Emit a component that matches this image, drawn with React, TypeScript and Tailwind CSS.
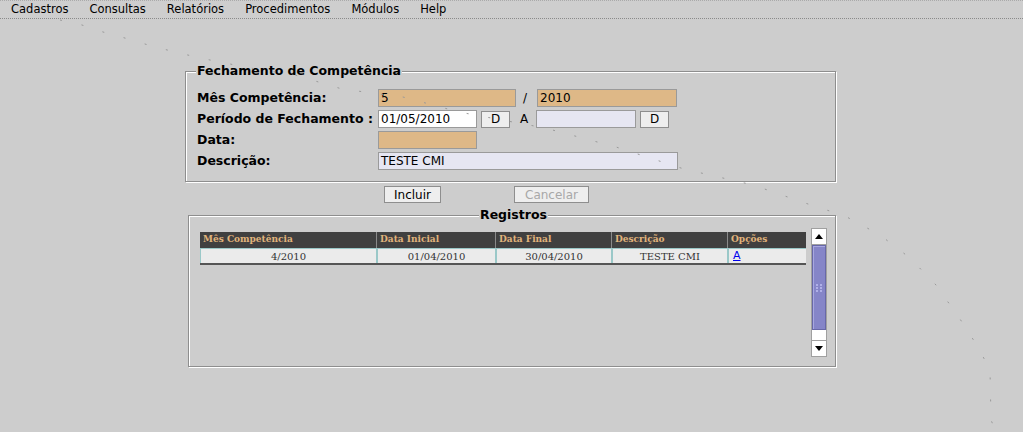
import React from 'react';

const sans = { fontFamily: '"DejaVu Sans", Verdana, sans-serif' };
const serif = { fontFamily: '"DejaVu Serif", Georgia, serif' };

const menu = ['Cadastros', 'Consultas', 'Relatórios', 'Procedimentos', 'Módulos', 'Help'];

const arc: [number, number][] = [
  [60, 20], [82, 25], [103, 32], [118, 36], [155, 47], [200, 58], [250, 68], [295, 75], [342, 89],
  [403, 97], [459, 112], [545, 128], [616, 147], [684, 169], [753, 185], [805, 203], [845, 216],
  [880, 235], [910, 258], [936, 285], [960, 319], [978, 347], [990, 370], [991, 420], [996, 432],
];

function Input({ w, bg, value }: { w: string; bg: string; value?: string }) {
  return (
    <div className={`${w} ${bg} h-[18px] border border-[#9a9a9a] flex items-center pl-[2px] text-[12px] font-normal text-black leading-none`}>
      {value}
    </div>
  );
}

function Btn({ label, w, disabled }: { label: string; w: string; disabled?: boolean }) {
  return (
    <button
      className={`${w} h-[17px] border border-[#8e8e8e] bg-[#eeeeee] text-[12px] font-normal leading-none flex items-center justify-center ${disabled ? 'text-[#a8a8a8]' : 'text-black'}`}
    >
      {label}
    </button>
  );
}

export default function App() {
  const cols = [
    { title: 'Mês Competência', w: 'w-[177px]', v: '4/2010' },
    { title: 'Data Inicial', w: 'w-[119px]', v: '01/04/2010' },
    { title: 'Data Final', w: 'w-[116px]', v: '30/04/2010' },
    { title: 'Descrição', w: 'w-[116px]', v: 'TESTE CMI' },
  ];

  return (
    <div className="relative w-[1023px] h-[432px] overflow-hidden bg-[#cdcdcd] text-black" style={sans}>
      <div className="h-[19px] border-b border-[#8a8a8a] border-t border-t-[#aaaaaa] border-dotted flex items-center pl-[11px] gap-[21px] text-[11.5px] bg-[#cecece]">
        {menu.map((m) => (
          <span key={m}>{m}</span>
        ))}
      </div>

      <fieldset className="ml-[185px] mt-[44px] w-[651px] border border-[#8e8e8e] shadow-[inset_1px_1px_0_#ffffff,1px_1px_0_#ffffff] pl-[11px] pr-[10px] pb-[11px] pt-[10px]">
        <legend className="bg-[#cdcdcd] px-[1px] -ml-[1px] text-[12.5px] font-bold leading-[16px]">Fechamento de Competência</legend>
        <div className="flex flex-col gap-[3px] text-[12.5px] font-bold">
          <div className="flex items-center h-[18px]">
            <span className="w-[181px]">Mês Competência:</span>
            <Input w="w-[138px]" bg="bg-[#deb887]" value="5" />
            <span className="w-[21px] pl-[7px] font-normal text-[12px]">/</span>
            <Input w="w-[140px]" bg="bg-[#deb887]" value="2010" />
          </div>
          <div className="flex items-center h-[18px]">
            <span className="w-[181px]">Período de Fechamento :</span>
            <Input w="w-[99px]" bg="bg-white" value="01/05/2010" />
            <span className="ml-[4px]">
              <Btn label="D" w="w-[29px]" />
            </span>
            <span className="w-[26px] pl-[2px] text-center font-normal text-[12px]">A</span>
            <Input w="w-[100px]" bg="bg-[#e6e6f2]" />
            <span className="ml-[4px]">
              <Btn label="D" w="w-[29px]" />
            </span>
          </div>
          <div className="flex items-center h-[18px]">
            <span className="w-[181px]">Data:</span>
            <Input w="w-[99px]" bg="bg-[#deb887]" />
          </div>
          <div className="flex items-center h-[18px]">
            <span className="w-[181px]">Descrição:</span>
            <Input w="w-[300px]" bg="bg-[#e6e6f2]" value="TESTE CMI" />
          </div>
        </div>
      </fieldset>

      <div className="flex items-center mt-[4px] ml-[384px] gap-[73px]">
        <Btn label="Incluir" w="w-[57px]" />
        <Btn label="Cancelar" w="w-[75px]" disabled />
      </div>

      <fieldset className="ml-[188px] mt-[4px] w-[648px] border border-[#8e8e8e] shadow-[inset_1px_1px_0_#ffffff,1px_1px_0_#ffffff] pl-[11px] pr-[8px] pb-[9px] pt-[5px]">
        <legend className="mx-auto bg-[#cdcdcd] px-[1px] text-[12.5px] font-bold leading-[16px]">Registros</legend>
        <div className="flex gap-[5px] h-[129px]">
          <div className="pt-[4px]">
            <div className="w-[606px]" style={serif}>
              <div className="flex h-[16px] bg-[#404040] text-[#e0b47c] text-[9px] font-bold">
                {cols.map((c) => (
                  <div key={c.title} className={`${c.w} border-r border-[#8a8a8a] flex items-center pl-[3px]`}>
                    {c.title}
                  </div>
                ))}
                <div className="flex-1 flex items-center pl-[3px]">Opções</div>
              </div>
              <div className="flex h-[17px] bg-[#ebebeb] text-[10px] text-[#333] border-t border-b-2 border-t-[#9ac8c8] border-b-[#555555]">
                {cols.map((c) => (
                  <div key={c.title} className={`${c.w} border-l border-r border-[#9ac8c8] flex items-center justify-center`}>
                    {c.v}
                  </div>
                ))}
                <div className="flex-1 border-l border-[#9ac8c8] flex items-center pl-[4px]">
                  <a href="#" className="text-[#0000ee] underline text-[11px]" style={sans}>A</a>
                </div>
              </div>
            </div>
          </div>
          <div className="w-[16px] h-[129px] flex flex-col bg-white border border-[#a0a0a0]">
            <div className="h-[16px] border-b border-[#a0a0a0] flex items-center justify-center">
              <svg width="8" height="5" viewBox="0 0 8 5"><path d="M4 0 L8 5 L0 5 Z" fill="#000" /></svg>
            </div>
            <div className="h-[85px] bg-[#8585c8] border border-[#6868a8] shadow-[inset_1px_1px_0_#a8a8e0] flex items-center justify-center">
              <svg width="6" height="8" viewBox="0 0 6 8">
                {[0, 3, 6].map((y) => (
                  <g key={y}>
                    <rect x="0" y={y} width="2" height="2" fill="#b0b0e8" />
                    <rect x="4" y={y} width="2" height="2" fill="#b0b0e8" />
                  </g>
                ))}
              </svg>
            </div>
            <div className="flex-1" />
            <div className="h-[16px] border-t border-[#a0a0a0] flex items-center justify-center">
              <svg width="8" height="5" viewBox="0 0 8 5"><path d="M0 0 L8 0 L4 5 Z" fill="#000" /></svg>
            </div>
          </div>
        </div>
      </fieldset>

      <svg className="absolute inset-0 pointer-events-none" width="1023" height="432">
        <polyline
          points={arc.map((p) => p.join(',')).join(' ')}
          fill="none"
          stroke="#9a9a9a"
          strokeWidth="1"
          strokeDasharray="2 20"
        />
      </svg>
    </div>
  );
}
